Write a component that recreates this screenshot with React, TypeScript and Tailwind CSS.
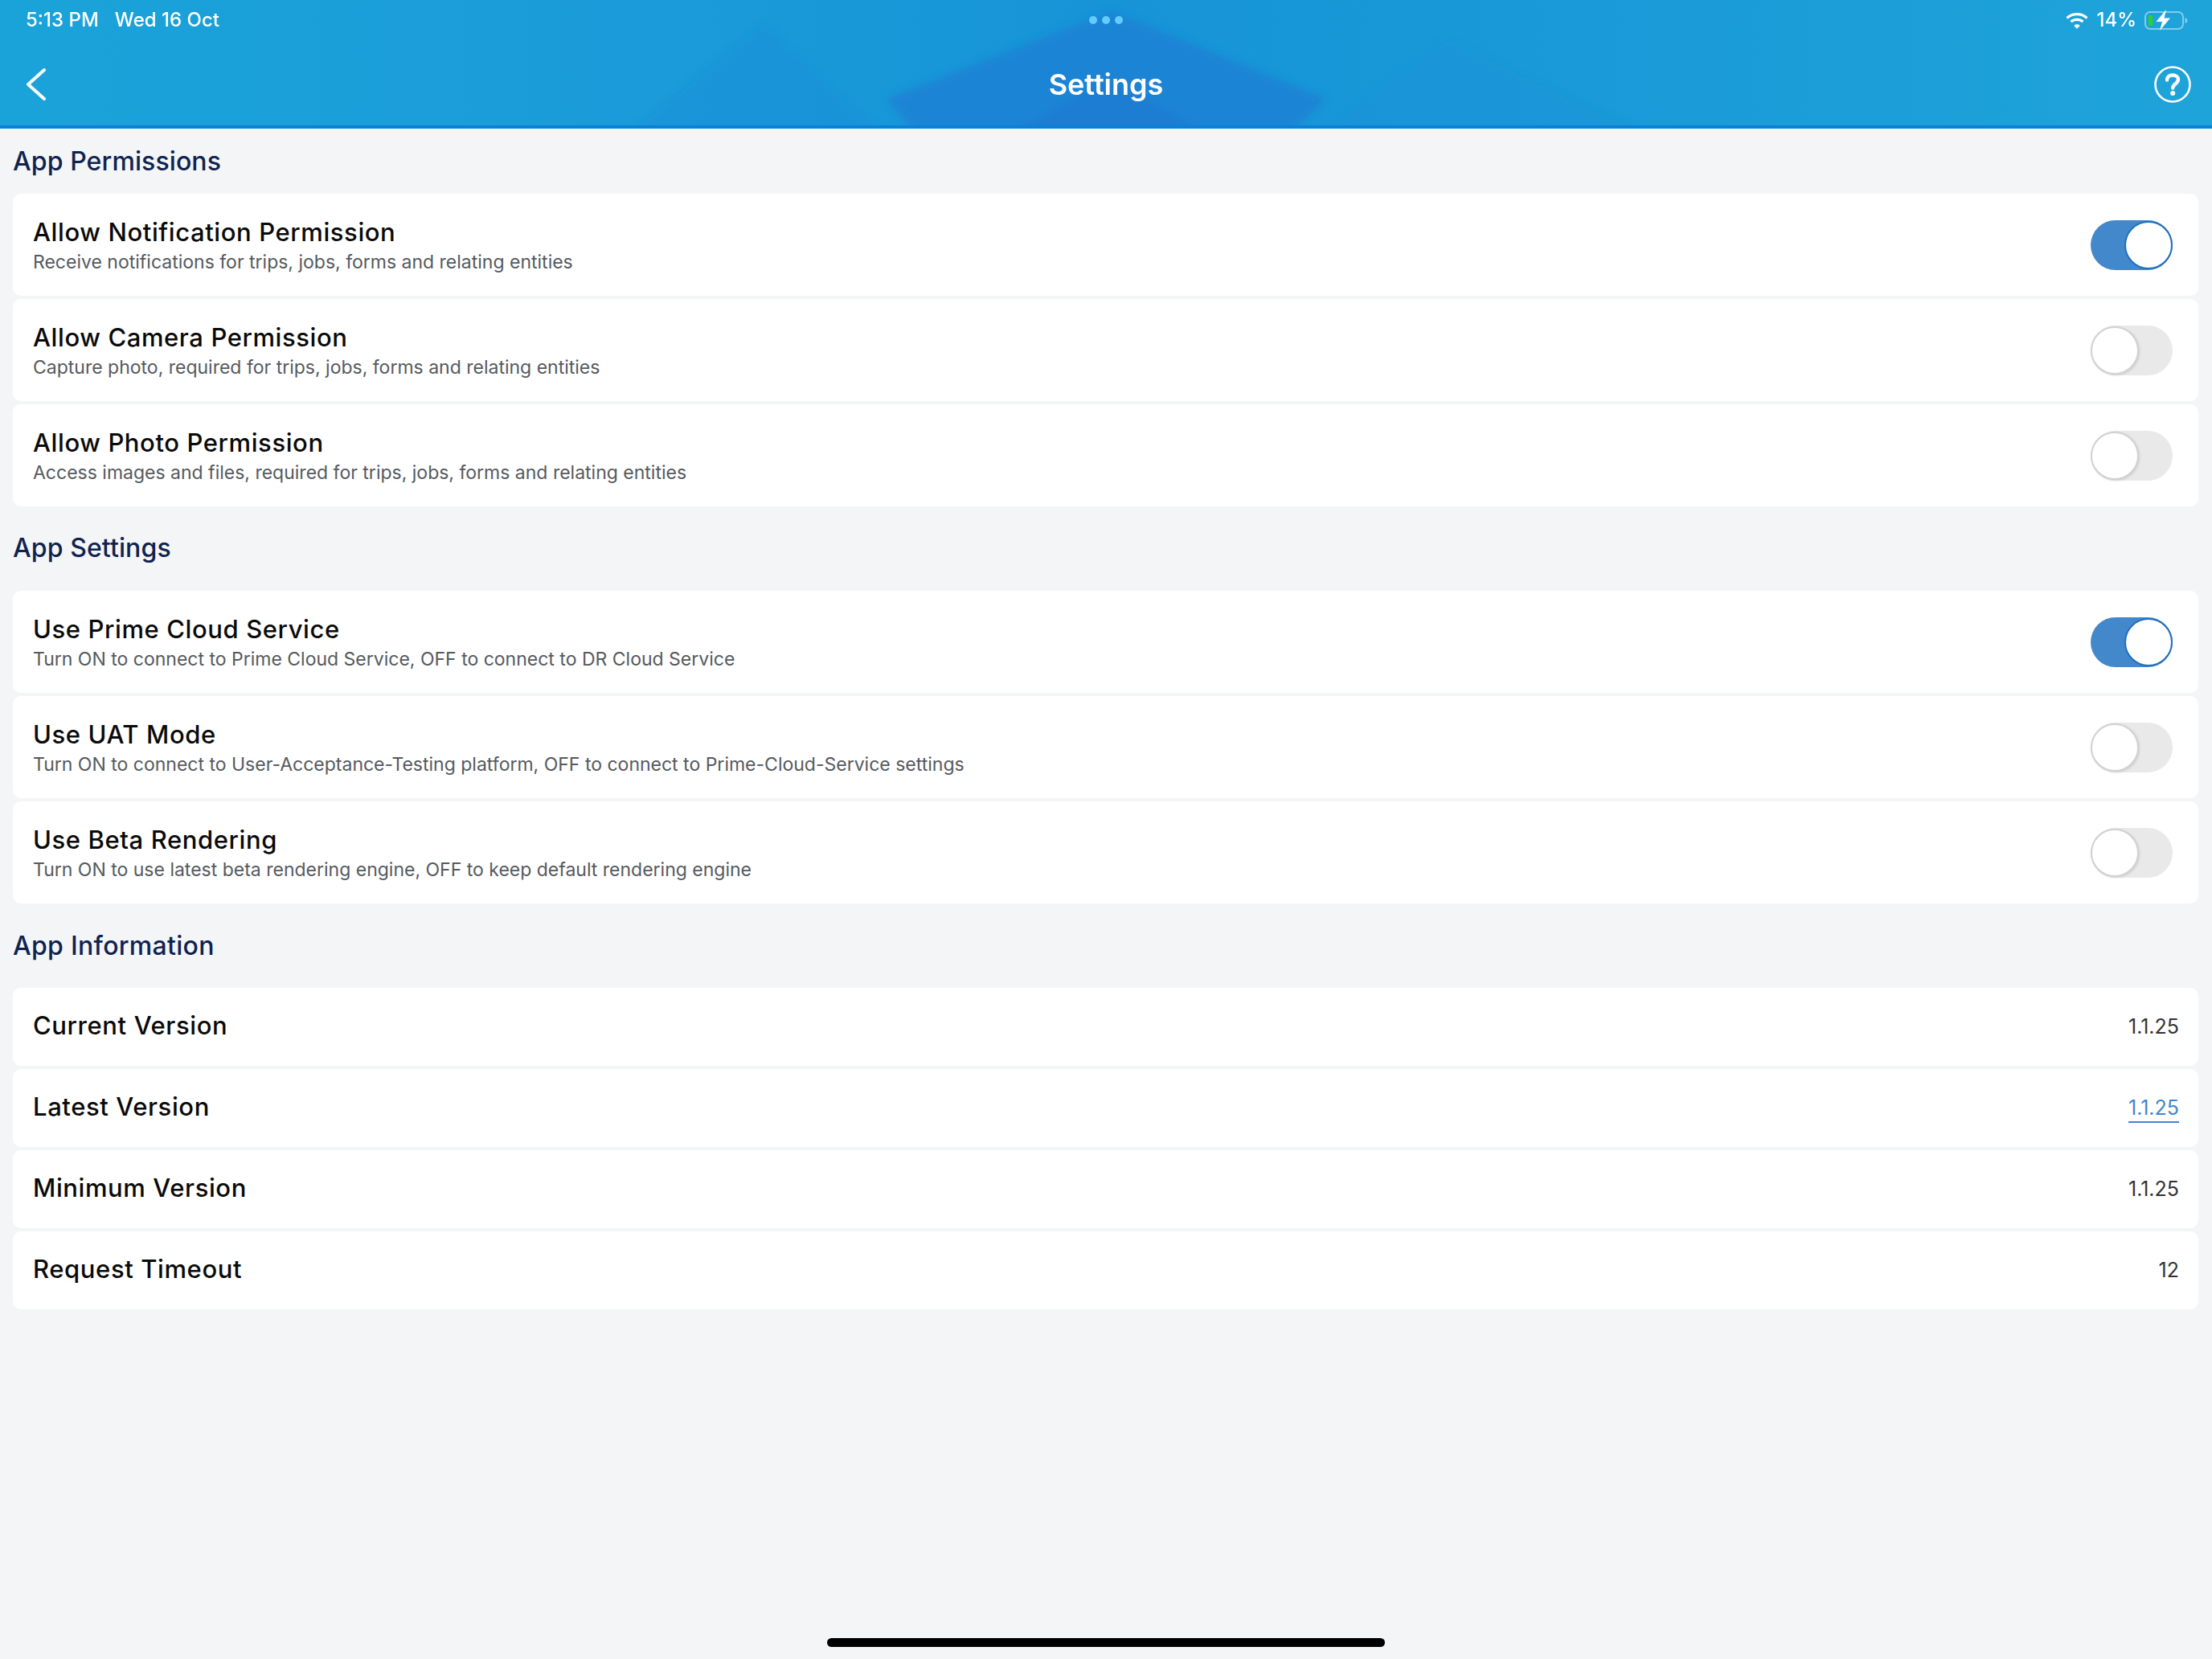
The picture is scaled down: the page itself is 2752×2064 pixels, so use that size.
const font = "font-['Inter','Noto_Sans',sans-serif]";

const permissions = [
  { title: "Allow Notification Permission", sub: "Receive notifications for trips, jobs, forms and relating entities", on: true },
  { title: "Allow Camera Permission", sub: "Capture photo, required for trips, jobs, forms and relating entities", on: false },
  { title: "Allow Photo Permission", sub: "Access images and files, required for trips, jobs, forms and relating entities", on: false },
];

const settings = [
  { title: "Use Prime Cloud Service", sub: "Turn ON to connect to Prime Cloud Service, OFF to connect to DR Cloud Service", on: true },
  { title: "Use UAT Mode", sub: "Turn ON to connect to User-Acceptance-Testing platform, OFF to connect to Prime-Cloud-Service settings", on: false },
  { title: "Use Beta Rendering", sub: "Turn ON to use latest beta rendering engine, OFF to keep default rendering engine", on: false },
];

const info = [
  { title: "Current Version", value: "1.1.25" },
  { title: "Latest Version", value: "1.1.25", link: true },
  { title: "Minimum Version", value: "1.1.25" },
  { title: "Request Timeout", value: "12" },
];

function HeaderPattern() {
  return (
    <svg className="absolute inset-0 w-full h-full" viewBox="0 0 2752 160" preserveAspectRatio="none">
      <defs>
        <linearGradient id="mid" x1="0" x2="1" y1="0" y2="0">
          <stop offset="0" stopColor="#1aa3d9" />
          <stop offset="0.3" stopColor="#1b9bd9" />
          <stop offset="0.5" stopColor="#1694d7" />
          <stop offset="0.72" stopColor="#1a9ad8" />
          <stop offset="1" stopColor="#1ea4d9" />
        </linearGradient>
        <filter id="soft" x="-10%" y="-10%" width="120%" height="120%">
          <feGaussianBlur stdDeviation="5" />
        </filter>
      </defs>
      <rect width="2752" height="160" fill="url(#mid)" />
      <g filter="url(#soft)">
        <polygon points="780,170 950,30 1100,170" fill="#148cd6" opacity="0.4" />
        <polygon points="1640,170 1800,50 2050,170" fill="#1e8fd6" opacity="0.3" />
        <polygon points="1103,123 1383,14 1650,123 1600,170 1143,170" fill="#1b84d4" />
        <polygon points="1250,170 1380,100 1510,170" fill="#1c7ad2" opacity="0.7" />
      </g>
      <rect y="156" width="2752" height="4" fill="#0a80d6" />
    </svg>
  );
}

function Wifi() {
  return (
    <svg width="28" height="21" viewBox="0 0 28 21" fill="none" stroke="white" strokeLinecap="butt">
      <path d="M1.5 7.5C8.5 1 19.5 1 26.5 7.5" strokeWidth="3.2" />
      <path d="M6.5 12C10.5 8.5 17.5 8.5 21.5 12" strokeWidth="3.2" />
      <path d="M10.5 17L14 20.5L17.5 17C15.5 15 12.5 15 10.5 17Z" fill="white" strokeWidth="0.5" />
    </svg>
  );
}

function Battery() {
  return (
    <svg width="54" height="26" viewBox="0 0 54 26" fill="none">
      <rect x="1" y="3" width="47" height="21" rx="6" stroke="white" strokeOpacity="0.45" strokeWidth="2" />
      <path d="M50.5 10V17C52.5 16.4 53.5 15 53.5 13.5C53.5 12 52.5 10.6 50.5 10Z" fill="white" fillOpacity="0.45" />
      <rect x="5" y="7" width="5" height="13" rx="1.5" fill="#34d020" />
      <path d="M27 0L14.5 15H22L19 26L32 10.5H24.5L27 0Z" fill="white" />
    </svg>
  );
}

function Help() {
  return (
    <svg width="46" height="46" viewBox="0 0 46 46" fill="none" stroke="white">
      <circle cx="23" cy="23" r="21.5" strokeWidth="2.6" />
      <path d="M16 17.5C16 13.5 19 11.5 23 11.5C27 11.5 30 13.6 30 17C30 22 23.2 22.5 23.2 27.5" strokeWidth="4.4" strokeLinecap="round" />
      <circle cx="23.2" cy="34" r="3" fill="white" stroke="none" />
    </svg>
  );
}

function Toggle({ on }: { on: boolean }) {
  if (on) {
    return (
      <div className="w-[102px] h-[62px] rounded-full bg-[#4388cb] flex items-center justify-end shrink-0">
        <div className="w-[60px] h-[60px] rounded-full bg-white border-2 border-[#1f6fbd]" />
      </div>
    );
  }
  return (
    <div className="w-[102px] h-[62px] rounded-full bg-[#e9e9ea] flex items-center shrink-0">
      <div className="w-[60px] h-[60px] rounded-full bg-white border-2 border-[#d2d2d2] shadow-[1px_1px_3px_rgba(0,0,0,0.12)]" />
    </div>
  );
}

function SwitchRow({ title, sub, on }: { title: string; sub: string; on: boolean }) {
  return (
    <div className="h-[127px] bg-white rounded-[10px] pl-[25px] pr-[32px] flex items-center justify-between">
      <div className="pt-[5px]">
        <div className="pt-[1px] -mb-[1px] text-[31px] tracking-[0.6px] leading-[38px] font-medium text-[#0a0a0a]">{title}</div>
        <div className="text-[23px] leading-[38px] text-[#555a60]">{sub}</div>
      </div>
      <Toggle on={on} />
    </div>
  );
}

function InfoRow({ title, value, link }: { title: string; value: string; link?: boolean }) {
  return (
    <div className="h-[97px] bg-white rounded-[10px] pl-[25px] pr-[24px] flex items-center justify-between">
      <div className="pb-[3px] text-[31px] tracking-[0.6px] leading-[38px] font-medium text-[#0a0a0a]">{title}</div>
      {link ? (
        <div className="text-[25px] leading-[34px] text-[#3f86cf] border-b-2 border-[#3f86cf]">{value}</div>
      ) : (
        <div className="pb-[2px] text-[25px] leading-[34px] text-[#333333]">{value}</div>
      )}
    </div>
  );
}

export default function App() {
  return (
    <div className={`${font} w-[2752px] h-[2064px] bg-[#f4f5f7] flex flex-col overflow-hidden`}>
      <header className="relative h-[160px] shrink-0 overflow-hidden text-white">
        <HeaderPattern />
        <div className="relative h-[50px] grid grid-cols-3 items-center px-[32px]">
          <div className="flex gap-[20px] text-[24px] font-medium">
            <span>5:13 PM</span>
            <span>Wed 16 Oct</span>
          </div>
          <div className="flex justify-center gap-[6px]">
            <span className="w-[10px] h-[10px] rounded-full bg-[#62cdfb]" />
            <span className="w-[10px] h-[10px] rounded-full bg-[#62cdfb]" />
            <span className="w-[10px] h-[10px] rounded-full bg-[#62cdfb]" />
          </div>
          <div className="flex justify-end items-center gap-[10px] text-[24px] font-medium -mr-[2px]">
            <Wifi />
            <span>14%</span>
            <Battery />
          </div>
        </div>
        <div className="relative h-[110px] grid grid-cols-3 items-center px-[32px]">
          <svg width="26" height="40" viewBox="0 0 26 40" fill="none" stroke="white" strokeWidth="4" strokeLinecap="round" strokeLinejoin="round">
            <path d="M23 2L3 20L23 38" />
          </svg>
          <div className="text-center text-[36px] font-semibold">Settings</div>
          <div className="flex justify-end -mr-[6px]">
            <Help />
          </div>
        </div>
      </header>

      <main className="pl-[16px] pr-[17px]">
        <h2 className="pt-[21px] pb-[20px] text-[32px] tracking-[0.1px] leading-[40px] font-medium text-[#0f2350]">App Permissions</h2>
        <div className="flex flex-col gap-[4px]">
          {permissions.map((p) => (
            <SwitchRow key={p.title} {...p} />
          ))}
        </div>
        <h2 className="pt-[32px] pb-[33px] text-[32px] tracking-[0.1px] leading-[40px] font-medium text-[#0f2350]">App Settings</h2>
        <div className="flex flex-col gap-[4px]">
          {settings.map((p) => (
            <SwitchRow key={p.title} {...p} />
          ))}
        </div>
        <h2 className="pt-[33px] pb-[32px] text-[32px] tracking-[0.3px] leading-[40px] font-medium text-[#0f2350]">App Information</h2>
        <div className="flex flex-col gap-[4px]">
          {info.map((p) => (
            <InfoRow key={p.title} {...p} />
          ))}
        </div>
      </main>

      <div className="mt-auto mb-[15px] mx-auto w-[694px] h-[11px] rounded-full bg-black" />
    </div>
  );
}
